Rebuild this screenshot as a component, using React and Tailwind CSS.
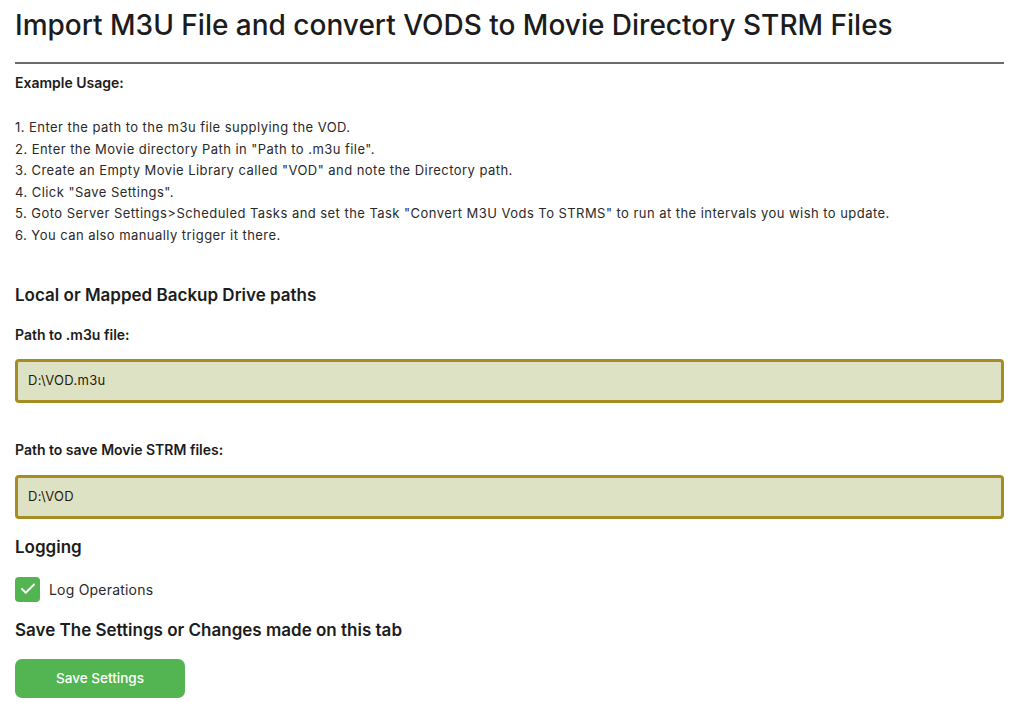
import { Check } from 'lucide-react'

const steps = [
  '1. Enter the path to the m3u file supplying the VOD.',
  '2. Enter the Movie directory Path in "Path to .m3u file".',
  '3. Create an Empty Movie Library called "VOD" and note the Directory path.',
  '4. Click "Save Settings".',
  '5. Goto Server Settings>Scheduled Tasks and set the Task "Convert M3U Vods To STRMS" to run at the intervals you wish to update.',
  '6. You can also manually trigger it there.',
]

function PathInput({ value }) {
  return (
    <div className="h-[44px] rounded-[4px] border-[3px] border-[#a58d22] bg-[#dde2c4] flex items-center px-[10px] text-[13px] tracking-[0.3px] text-[#2b1a05]">
      {value}
    </div>
  )
}

export default function App() {
  return (
    <div className="min-h-[712px] bg-white pl-[15px] pr-[21px] pt-[6px] text-[#1c1c1c] font-['Inter',sans-serif]">
      {/* Header */}
      <h1 className="text-[28px] font-medium leading-[38px]">
        Import M3U File and convert VODS to Movie Directory STRM Files
      </h1>
      <div className="mt-[18px] h-[2px] bg-[#6b6b6b]" />

      {/* Usage */}
      <p className="mt-[10px] text-[14px] font-semibold leading-[18px]">Example Usage:</p>
      <div className="mt-[25px] text-[13px] leading-[21.6px] tracking-[0.45px] text-[#2a2a2a]">
        {steps.map((s) => (
          <p key={s}>{s}</p>
        ))}
      </div>

      {/* Paths */}
      <h2 className="mt-[36px] text-[17px] font-semibold leading-[24px]">Local or Mapped Backup Drive paths</h2>
      <p className="mt-[19px] text-[14px] font-semibold leading-[18px]">Path to .m3u file:</p>
      <div className="mt-[15px]">
        <PathInput value="D:\VOD.m3u" />
      </div>

      <p className="mt-[38px] text-[14px] font-semibold leading-[18px]">Path to save Movie STRM files:</p>
      <div className="mt-[16px]">
        <PathInput value="D:\VOD" />
      </div>

      {/* Logging */}
      <h2 className="mt-[16px] text-[17px] font-semibold leading-[24px]">Logging</h2>
      <label className="mt-[18px] flex items-center gap-[9px]">
        <span className="w-[25px] h-[25px] rounded-[4px] bg-[#52b552] flex items-center justify-center">
          <Check size={18} strokeWidth={2.5} className="text-white" />
        </span>
        <span className="text-[14px] tracking-[0.2px] text-[#2a2a2a]">Log Operations</span>
      </label>

      <h2 className="mt-[16px] text-[17px] font-semibold leading-[24px]">Save The Settings or Changes made on this tab</h2>
      <button className="mt-[17px] w-[170px] h-[39px] rounded-[7px] bg-[#52b552] text-white text-[13.5px] font-medium">
        Save Settings
      </button>
    </div>
  )
}
